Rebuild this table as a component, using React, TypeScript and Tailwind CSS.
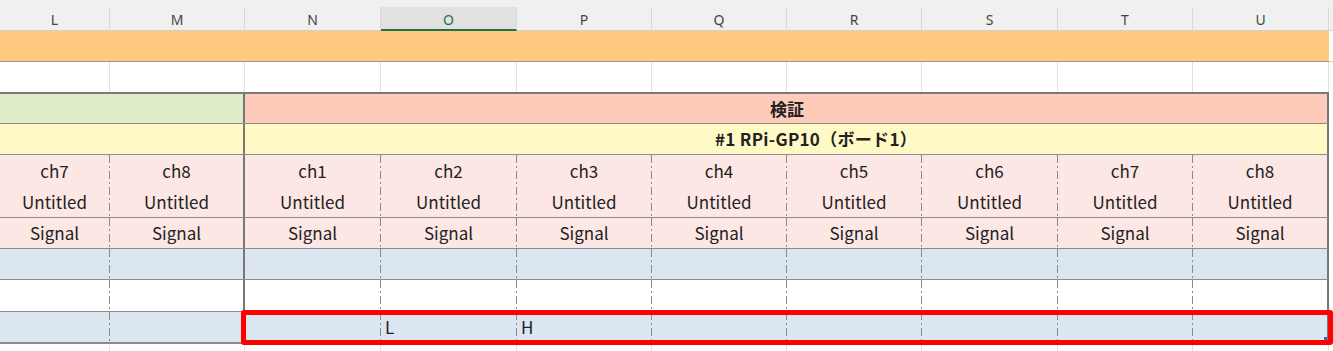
import React from "react";

const W = [
  "w-[110px]",
  "w-[135px]",
  "w-[136px]",
  "w-[136px]",
  "w-[135px]",
  "w-[135px]",
  "w-[135px]",
  "w-[136px]",
  "w-[135px]",
  "w-[136px]",
];
const LETTERS = ["L", "M", "N", "O", "P", "Q", "R", "S", "T", "U"];

type Div = "dash" | "thick" | "grid" | "none";

function Divider({ kind }: { kind: Div }) {
  if (kind === "dash")
    return (
      <div className="w-px shrink-0 self-stretch bg-[image:repeating-linear-gradient(to_bottom,#8a8a8a_0px,#8a8a8a_8px,transparent_8px,transparent_11px,#8a8a8a_11px,#8a8a8a_13px,transparent_13px,transparent_16px)]" />
    );
  if (kind === "thick") return <div className="w-0.5 shrink-0 self-stretch bg-[#787878]" />;
  if (kind === "grid") return <div className="w-px shrink-0 self-stretch bg-[#e1e1e1]" />;
  return null;
}

function Cell({
  w,
  bg,
  div,
  children,
  inner = "justify-center",
}: {
  w: string;
  bg: string;
  div: Div;
  children?: React.ReactNode;
  inner?: string;
}) {
  return (
    <div className={`flex h-full shrink-0 ${w} ${bg}`}>
      <div className={`flex min-w-0 flex-1 items-center ${inner}`}>{children}</div>
      <Divider kind={div} />
    </div>
  );
}

const dataDiv = (i: number): Div => (i === 1 || i === 9 ? "thick" : "dash");

function DataRow({
  h,
  bg,
  border,
  content,
  inner,
}: {
  h: string;
  bg: string;
  border: string;
  content?: (i: number) => React.ReactNode;
  inner?: string;
}) {
  return (
    <div className={`flex ${h}`}>
      <div className={`flex w-[1329px] shrink-0 border-[#8c8c8c] ${border}`}>
        {W.map((w, i) => (
          <Cell key={i} w={w} bg={bg} div={dataDiv(i)} inner={inner}>
            {content ? content(i) : null}
          </Cell>
        ))}
      </div>
      <div className="flex-1 bg-white" />
    </div>
  );
}

export default function App() {
  const font = "font-['Noto_Sans_CJK_JP','Noto_Sans',sans-serif]";
  return (
    <div className={`relative h-[351px] w-[1333px] overflow-hidden bg-white text-[#222] ${font}`}>
      {/* column header */}
      <div className="flex h-[31px] items-end bg-[#f0f0f0]">
        {W.map((w, i) => (
          <div
            key={i}
            className={`flex h-[24px] shrink-0 items-center justify-center border-r border-[#d8d8d8] pt-[2px] font-['Noto_Sans',sans-serif] text-[14px] ${w} ${
              i === 3
                ? "border-b-2 border-b-[#217346] bg-[#e1e1e1] text-[#217346]"
                : "border-b border-b-[#d0d0d0] text-[#444]"
            }`}
          >
            {LETTERS[i]}
          </div>
        ))}
        <div className="h-[24px] flex-1 border-b border-b-[#d0d0d0]" />
      </div>

      {/* orange row */}
      <div className="flex h-[31px]">
        <div className="w-[1329px] shrink-0 border-b border-[#9a9a9a] bg-[#ffca7f]" />
        <div className="flex-1 border-b border-[#d0d0d0] bg-white" />
      </div>

      {/* white row */}
      <div className="flex h-[30px]">
        {W.map((w, i) => (
          <Cell key={i} w={w} bg="bg-white" div="grid" />
        ))}
        <div className="flex-1" />
      </div>

      {/* 検証 */}
      <div className="flex h-[32px]">
        <div className="flex w-[1329px] shrink-0 border-t-2 border-b border-t-[#7a7a7a] border-b-[#8c8c8c]">
          <Cell w="w-[245px]" bg="bg-[#dfecca]" div="thick" />
          <Cell w="w-[1084px]" bg="bg-[#fecbbb]" div="thick">
            <span className="pl-[2px] text-[17px] font-bold">検証</span>
          </Cell>
        </div>
        <div className="flex-1" />
      </div>

      {/* board title */}
      <div className="flex h-[31px]">
        <div className="flex w-[1329px] shrink-0 border-b border-[#8c8c8c]">
          <Cell w="w-[245px]" bg="bg-[#fff9c6]" div="thick" />
          <Cell w="w-[1084px]" bg="bg-[#fff9c6]" div="thick" inner="justify-start pl-[470px]">
            <span className="text-[17px] font-bold tracking-[0.3px]">#1 RPi-GP10（ボード1）</span>
          </Cell>
        </div>
        <div className="flex-1" />
      </div>

      {/* ch + Untitled */}
      <DataRow
        h="h-[63px]"
        bg="bg-[#fce7e5]"
        border="border-b"
        content={(i) => (
          <div className="flex flex-col items-center text-[17px] leading-[31px]">
            <span>ch{i < 2 ? i + 7 : i - 1}</span>
            <span>Untitled</span>
          </div>
        )}
      />

      {/* Signal */}
      <DataRow
        h="h-[31px]"
        bg="bg-[#fce7e5]"
        border="border-b"
        content={() => <span className="text-[17px]">Signal</span>}
      />

      <DataRow h="h-[31px]" bg="bg-[#dce6f0]" border="border-b" />
      <DataRow h="h-[32px]" bg="bg-white" border="border-b" />
      <DataRow
        h="h-[32px]"
        bg="bg-[#dce6f0]"
        border="border-b-2"
        inner="justify-start pl-[4px]"
        content={(i) =>
          i === 3 ? (
            <span className="text-[17px]">L</span>
          ) : i === 4 ? (
            <span className="text-[17px]">H</span>
          ) : null
        }
      />

      {/* below */}
      <div className="flex h-[20px]">
        {W.map((w, i) => (
          <Cell key={i} w={w} bg="bg-white" div="grid" />
        ))}
        <div className="flex-1" />
      </div>

      {/* selection highlight */}
      <div className="absolute left-[241px] top-[310px] h-[35px] w-[1092px] rounded-[3px] border-[5px] border-[#ff0000]" />
      <div className="absolute left-[1324px] top-[337px] h-[3px] w-[3px] bg-[#3a66c4]" />
    </div>
  );
}
